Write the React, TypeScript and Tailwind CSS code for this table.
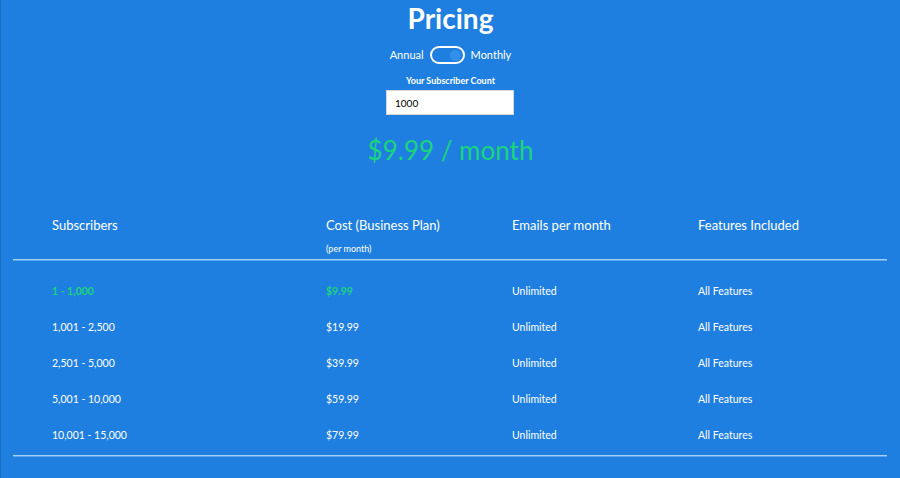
import { useState } from 'react';

const tiers = [
  { range: '1 - 1,000', cost: '$9.99' },
  { range: '1,001 - 2,500', cost: '$19.99' },
  { range: '2,501 - 5,000', cost: '$39.99' },
  { range: '5,001 - 10,000', cost: '$59.99' },
  { range: '10,001 - 15,000', cost: '$79.99' },
];

const App = () => {
  const [count, setCount] = useState('1000');

  return (
    <div
      className="min-h-[478px] w-full bg-[#1f7fe0] text-white border-l border-[#1a6fc4]"
      style={{ fontFamily: 'Lato, "Open Sans", sans-serif' }}
    >
      <div className="flex flex-col items-center">
        <h1 className="mt-[1px] text-[28px] font-bold leading-[34px]">Pricing</h1>
        <div className="mt-[11px] flex items-center gap-[6px] text-[11px]">
          <span>Annual</span>
          <div className="flex h-[18px] w-[35px] items-center justify-end rounded-full border-2 border-white px-[2px]">
            <div className="h-[11px] w-[11px] rounded-full bg-[#3290ea]" />
          </div>
          <span>Monthly</span>
        </div>
        <label className="mt-[11px] text-[9px] font-bold leading-[12px]" htmlFor="count">
          Your Subscriber Count
        </label>
        <input
          id="count"
          className="mt-[3px] -ml-[1px] h-[25px] w-[128px] border border-[#d8d8d8] bg-white px-[8px] text-[10px] text-black outline-none"
          value={count}
          onChange={(e) => setCount(e.target.value)}
        />
        <div className="mt-[19px] text-[26px] leading-[32px] text-[#1bd47e]">$9.99 / month</div>
      </div>

      <div className="ml-[12px] mr-[13px] mt-[49px]">
        <div className="grid grid-cols-[274px_186px_186px_1fr] px-[39px] text-[13px]">
          <div className="leading-[20px]">Subscribers</div>
          <div>
            <div className="leading-[20px]">Cost (Business Plan)</div>
            <div className="mt-[8px] text-[9px] leading-[12px]">(per month)</div>
          </div>
          <div className="leading-[20px]">Emails per month</div>
          <div className="leading-[20px]">Features Included</div>
        </div>
        <div className="mt-[4px] h-[2px] border-t border-[#a9d2f7] bg-[#5aa6ee]" />
        <div className="pt-[13px] pb-[1px]">
          {tiers.map((t, i) => (
            <div
              key={t.range}
              className="grid h-[36px] grid-cols-[274px_186px_186px_1fr] items-center px-[39px] text-[10.5px]"
            >
              <div className={i === 0 ? 'font-bold text-[#1bd47e]' : ''}>{t.range}</div>
              <div className={i === 0 ? 'font-bold text-[#1bd47e]' : ''}>{t.cost}</div>
              <div>Unlimited</div>
              <div>All Features</div>
            </div>
          ))}
        </div>
        <div className="h-[2px] border-t border-[#a9d2f7] bg-[#5aa6ee]" />
      </div>
    </div>
  );
};

export default App;
